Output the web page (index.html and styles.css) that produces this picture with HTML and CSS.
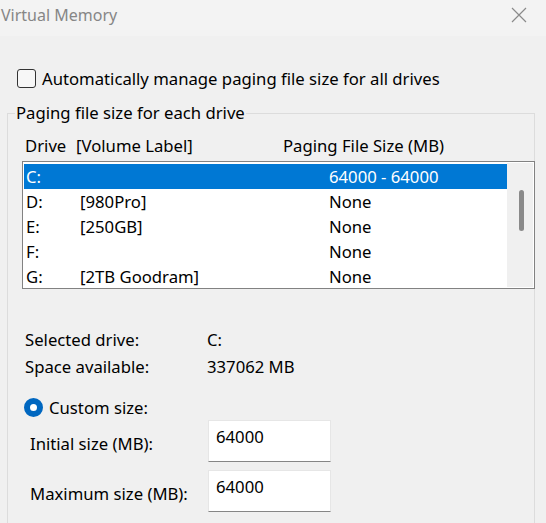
FILE: index.html
```html
<!DOCTYPE html>
<html>
<head>
<meta charset="utf-8">
<link rel="stylesheet" href="styles.css">
</head>
<body>
<div class="titlebar">
  <span class="title">Virtual Memory</span>
  <svg class="close" width="16" height="16" viewBox="0 0 16 16"><path d="M1 1 L15 15 M15 1 L1 15" stroke="#8a8a8a" stroke-width="1.2" fill="none"/></svg>
</div>
<div class="main">
  <label class="auto-row">
    <span class="checkbox"></span>
    <span>Automatically manage paging file size for all drives</span>
  </label>
  <fieldset class="group">
    <legend>Paging file size for each drive</legend>
    <div class="head">
      <span class="c-drive">Drive</span>
      <span class="c-label">[Volume Label]</span>
      <span class="c-size">Paging File Size (MB)</span>
    </div>
    <div class="list">
      <div class="rows">
        <div class="row sel"><span class="r-drive">C:</span><span class="r-label"></span><span class="r-size">64000 - 64000</span></div>
        <div class="row"><span class="r-drive">D:</span><span class="r-label">[980Pro]</span><span class="r-size">None</span></div>
        <div class="row"><span class="r-drive">E:</span><span class="r-label">[250GB]</span><span class="r-size">None</span></div>
        <div class="row"><span class="r-drive">F:</span><span class="r-label"></span><span class="r-size">None</span></div>
        <div class="row"><span class="r-drive">G:</span><span class="r-label">[2TB Goodram]</span><span class="r-size">None</span></div>
      </div>
      <div class="scrollbar"><div class="thumb"></div></div>
    </div>
    <div class="info">
      <div class="info-row"><span class="i-key">Selected drive:</span><span>C:</span></div>
      <div class="info-row"><span class="i-key">Space available:</span><span>337062 MB</span></div>
    </div>
    <label class="radio-row">
      <span class="radio"></span>
      <span>Custom size:</span>
    </label>
    <div class="field-row">
      <span class="f-label">Initial size (MB):</span>
      <div class="input">64000</div>
    </div>
    <div class="field-row">
      <span class="f-label">Maximum size (MB):</span>
      <div class="input">64000</div>
    </div>
  </fieldset>
</div>
</body>
</html>
```
FILE: styles.css
```css
html, body {
  margin: 0;
  padding: 0;
  background: #f0f0f0;
  font-family: "Noto Sans", "Open Sans", sans-serif;
  font-size: 16.7px;
  color: #000;
  overflow: hidden;
}
.titlebar {
  height: 36px;
  background: #f3f3f3;
  display: flex;
  align-items: center;
  justify-content: space-between;
  padding: 0 19px 0 1px;
}
.title {
  font-size: 16px;
  color: #868686;
  position: relative;
  top: -3px;
}
.close {
  position: relative;
  top: -3px;
}
.main {
  padding: 0 11px 0 7px;
}
.auto-row {
  display: flex;
  align-items: center;
  height: 22px;
  margin-top: 31px;
  padding-left: 10px;
}
.checkbox {
  width: 17px;
  height: 17px;
  border: 1px solid #333;
  border-radius: 3px;
  background: #f7f7f7;
  margin-right: 6px;
}
.group {
  margin: 13px 0 0 0;
  padding: 0 0 11px 0;
  border: 1px solid #dcdcdc;
  min-width: 0;
}
.group legend {
  margin-left: 7px;
  padding: 0 1px;
  line-height: 22px;
}
.head {
  display: flex;
  height: 22px;
  align-items: center;
  margin-top: 10px;
  padding-left: 17px;
}
.c-drive { width: 51px; }
.c-label { width: 207px; }
.list {
  display: flex;
  height: 126px;
  margin: 5px -1px 0 14px;
  border: 1px solid #828282;
  background: #fff;
}
.rows {
  flex: 1;
  padding: 2px 0 0 1px;
  overflow: hidden;
}
.row {
  display: flex;
  align-items: center;
  height: 25px;
  padding-left: 2px;
}
.row.sel {
  background: #0078d4;
  color: #fff;
}
.r-drive { width: 54px; }
.r-label { width: 249px; }
.scrollbar {
  width: 26px;
  background: #f0f0f0;
  margin: 1px 1px 1px 0;
  display: flex;
  justify-content: center;
  padding-left: 3px;
  box-sizing: border-box;
}
.thumb {
  width: 5px;
  height: 41px;
  margin-top: 27px;
  background: #8a8a8a;
  border-radius: 3px;
}
.info {
  margin-top: 37px;
  padding-left: 17px;
}
.info-row {
  display: flex;
  align-items: center;
  height: 27px;
}
.i-key { width: 182px; }
.radio-row {
  display: flex;
  align-items: center;
  height: 24px;
  margin-top: 15px;
  padding-left: 16px;
}
.radio {
  width: 19px;
  height: 19px;
  border-radius: 50%;
  background: #fff;
  box-sizing: border-box;
  border: 6px solid #0067c0;
  margin-right: 6px;
}
.field-row {
  display: flex;
  align-items: flex-start;
  margin-top: 1px;
  padding-left: 22px;
}
.field-row + .field-row { margin-top: 8px; }
.f-label {
  width: 178px;
  margin-top: 12px;
}
.input {
  width: 123px;
  height: 42px;
  box-sizing: border-box;
  background: #fff;
  border: 1px solid #e6e6e6;
  border-bottom: 1px solid #868686;
  padding: 4px 0 0 7px;
}
```
